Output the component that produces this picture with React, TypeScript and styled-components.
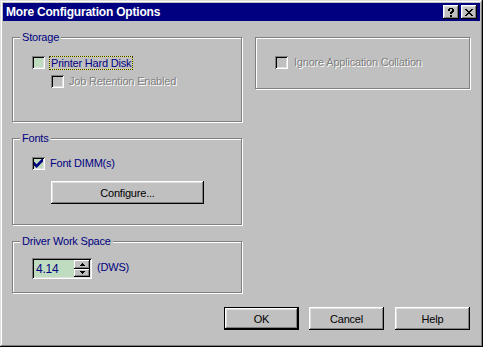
import React from "react";
import styled, { createGlobalStyle } from "styled-components";

const Global = createGlobalStyle`
  html, body { margin: 0; padding: 0; background: #c0c0c0; }
  body { font-family: "Liberation Sans", Arial, sans-serif; font-size: 11px; letter-spacing: -0.2px; }
  * { box-sizing: border-box; }
`;

const Window = styled.div`
  width: 483px;
  height: 347px;
  padding: 3px;
  background: #c0c0c0;
  box-shadow: inset -1px -1px #000, inset 1px 1px #dfdfdf, inset -2px -2px #808080,
    inset 2px 2px #fff;
  display: flex;
  flex-direction: column;
`;

const TitleBar = styled.div`
  height: 18px;
  background: #000080;
  display: flex;
  align-items: center;
  padding: 0 3px 0 3px;
`;

const Title = styled.div`
  flex: 1;
  color: #fff;
  font-weight: bold;
  font-size: 12px;
  letter-spacing: -0.2px;
  white-space: nowrap;
`;

const TitleButton = styled.div<{ $gap?: number }>`
  width: 16px;
  height: 14px;
  margin-left: ${(p) => p.$gap ?? 0}px;
  background: #c0c0c0;
  box-shadow: inset -1px -1px #000, inset 1px 1px #fff, inset -2px -2px #808080,
    inset 2px 2px #dfdfdf;
  display: flex;
  align-items: center;
  justify-content: center;
`;

const Body = styled.div`
  flex: 1;
  display: flex;
  flex-direction: column;
  padding: 16px 10px 14px 9px;
`;

const Columns = styled.div`
  display: grid;
  grid-template-columns: 230px 215px;
  column-gap: 13px;
  align-items: start;
`;

const Column = styled.div`
  display: flex;
  flex-direction: column;
  gap: 16px;
`;

const Group = styled.div<{ $h: number; $pt: number }>`
  position: relative;
  height: ${(p) => p.$h}px;
  border: 1px solid #808080;
  box-shadow: inset 1px 1px #fff, 1px 1px #fff;
  padding: ${(p) => p.$pt}px 0 0 19px;
  display: flex;
  flex-direction: column;
  align-items: flex-start;
`;

const Legend = styled.span`
  position: absolute;
  top: -7px;
  left: 7px;
  padding: 0 2px;
  background: #c0c0c0;
  color: #000080;
  line-height: 13px;
`;

const CheckRow = styled.div<{ $indent?: number; $mt?: number }>`
  display: flex;
  align-items: center;
  height: 13px;
  margin-left: ${(p) => p.$indent ?? 0}px;
  margin-top: ${(p) => p.$mt ?? 0}px;
`;

const Box = styled.div<{ $disabled?: boolean }>`
  width: 13px;
  height: 13px;
  flex: none;
  background: ${(p) => (p.$disabled ? "#c0c0c0" : "#c0dcc0")};
  box-shadow: inset 1px 1px #808080, inset -1px -1px #fff, inset 2px 2px #000,
    inset -2px -2px #dfdfdf;
  display: flex;
  align-items: center;
  justify-content: center;
`;

const Label = styled.span<{ $disabled?: boolean; $focus?: boolean; $ml?: number }>`
  margin-left: ${(p) => p.$ml ?? (p.$focus ? 4 : 5)}px;
  padding: 0 ${(p) => (p.$focus ? 1 : 0)}px;
  line-height: ${(p) => (p.$focus ? 12 : 13)}px;
  color: ${(p) => (p.$disabled ? "#808080" : "#000080")};
  text-shadow: ${(p) => (p.$disabled ? "1px 1px 0 #fff" : "none")};
  white-space: nowrap;
  border: ${(p) => (p.$focus ? "1px solid #f0f060" : "0")};
  outline: ${(p) => (p.$focus ? "1px dotted #303000" : "none")};
  outline-offset: -1px;
`;

const Button = styled.button<{ $default?: boolean; $w: number; $ml?: number; $mt?: number }>`
  width: ${(p) => p.$w}px;
  height: 23px;
  margin-left: ${(p) => p.$ml ?? 0}px;
  margin-top: ${(p) => p.$mt ?? 0}px;
  padding: 0;
  border: ${(p) => (p.$default ? "1px solid #000" : "0")};
  background: #c0c0c0;
  font-family: "Liberation Sans", Arial, sans-serif;
  font-size: 11px;
  font-weight: normal;
  letter-spacing: -0.2px;
  color: #000;
  box-shadow: inset -1px -1px #000, inset 1px 1px #fff, inset -2px -2px #808080,
    inset 2px 2px #dfdfdf;
`;

const SpinRow = styled.div`
  display: flex;
  align-items: center;
`;

const SpinField = styled.div`
  width: 60px;
  height: 21px;
  background: #c0dcc0;
  box-shadow: inset 1px 1px #808080, inset -1px -1px #fff, inset 2px 2px #000,
    inset -2px -2px #dfdfdf;
  display: flex;
  align-items: center;
  padding: 0 2px 0 4px;
`;

const SpinValue = styled.span`
  flex: 1;
  color: #000080;
  font-size: 12px;
`;

const SpinButtons = styled.div`
  display: flex;
  flex-direction: column;
  width: 16px;
  height: 17px;
`;

const SpinHalf = styled.div`
  flex: 1;
  background: #c0c0c0;
  box-shadow: inset -1px -1px #000, inset 1px 1px #fff, inset -2px -2px #808080;
  display: flex;
  align-items: center;
  justify-content: center;
`;

const Unit = styled.span`
  margin-left: 5px;
  color: #000080;
  margin-top: -3px;
`;

const Footer = styled.div`
  margin-top: auto;
  display: flex;
  justify-content: flex-end;
`;

const Check = () => (
  <svg width="9" height="9" viewBox="0 0 7 7">
    <path d="M0 2v3l2 2l5-5v-3l-5 5z" fill="#000080" />
  </svg>
);

const Arrow = ({ up }: { up?: boolean }) => (
  <svg width="5" height="3" viewBox="0 0 5 3">
    <path d={up ? "M2 0h1v1h1v1h1v1H0V2h1V1h1z" : "M0 0h5v1H4v1H3v1H2V2H1V1H0z"} fill="#000" />
  </svg>
);

export default function App() {
  return (
    <>
      <Global />
      <Window>
        <TitleBar>
          <Title>More Configuration Options</Title>
          <TitleButton>
            <svg width="8" height="9" viewBox="0 0 8 9">
              <path d="M1 1h1V0h4v1h1v3H6v1H5v1H3V4h1V3h1V1H3v2H1z M3 7h2v2H3z" fill="#000" />
            </svg>
          </TitleButton>
          <TitleButton $gap={2}>
            <svg width="8" height="7" viewBox="0 0 8 7">
              <path d="M0 0h2v1h1v1h2V1h1V0h2v1H7v1H6v1H5v1h1v1h1v1h1v1H6V6H5V5H3v1H2v1H0V6h1V5h1V4h1V3H2V2H1V1H0z" fill="#000" />
            </svg>
          </TitleButton>
        </TitleBar>
        <Body>
          <Columns>
            <Column>
              <Group $h={85} $pt={18}>
                <Legend>Storage</Legend>
                <CheckRow>
                  <Box />
                  <Label $focus>Printer Hard Disk</Label>
                </CheckRow>
                <CheckRow $indent={19} $mt={6}>
                  <Box $disabled />
                  <Label $disabled>Job Retention Enabled</Label>
                </CheckRow>
              </Group>
              <Group $h={87} $pt={18}>
                <Legend>Fonts</Legend>
                <CheckRow>
                  <Box>
                    <Check />
                  </Box>
                  <Label>Font DIMM(s)</Label>
                </CheckRow>
                <Button $w={153} $ml={19} $mt={11}>
                  Configure...
                </Button>
              </Group>
              <Group $h={52} $pt={16}>
                <Legend>Driver Work Space</Legend>
                <SpinRow>
                  <SpinField>
                    <SpinValue>4.14</SpinValue>
                    <SpinButtons>
                      <SpinHalf>
                        <Arrow up />
                      </SpinHalf>
                      <SpinHalf>
                        <Arrow />
                      </SpinHalf>
                    </SpinButtons>
                  </SpinField>
                  <Unit>(DWS)</Unit>
                </SpinRow>
              </Group>
            </Column>
            <Column>
              <Group $h={52} $pt={18}>
                <CheckRow>
                  <Box $disabled />
                  <Label $disabled $ml={6}>
                    Ignore Application Collation
                  </Label>
                </CheckRow>
              </Group>
            </Column>
          </Columns>
          <Footer>
            <Button $default $w={75}>
              OK
            </Button>
            <Button $w={75} $ml={10}>
              Cancel
            </Button>
            <Button $w={75} $ml={11}>
              Help
            </Button>
          </Footer>
        </Body>
      </Window>
    </>
  );
}
